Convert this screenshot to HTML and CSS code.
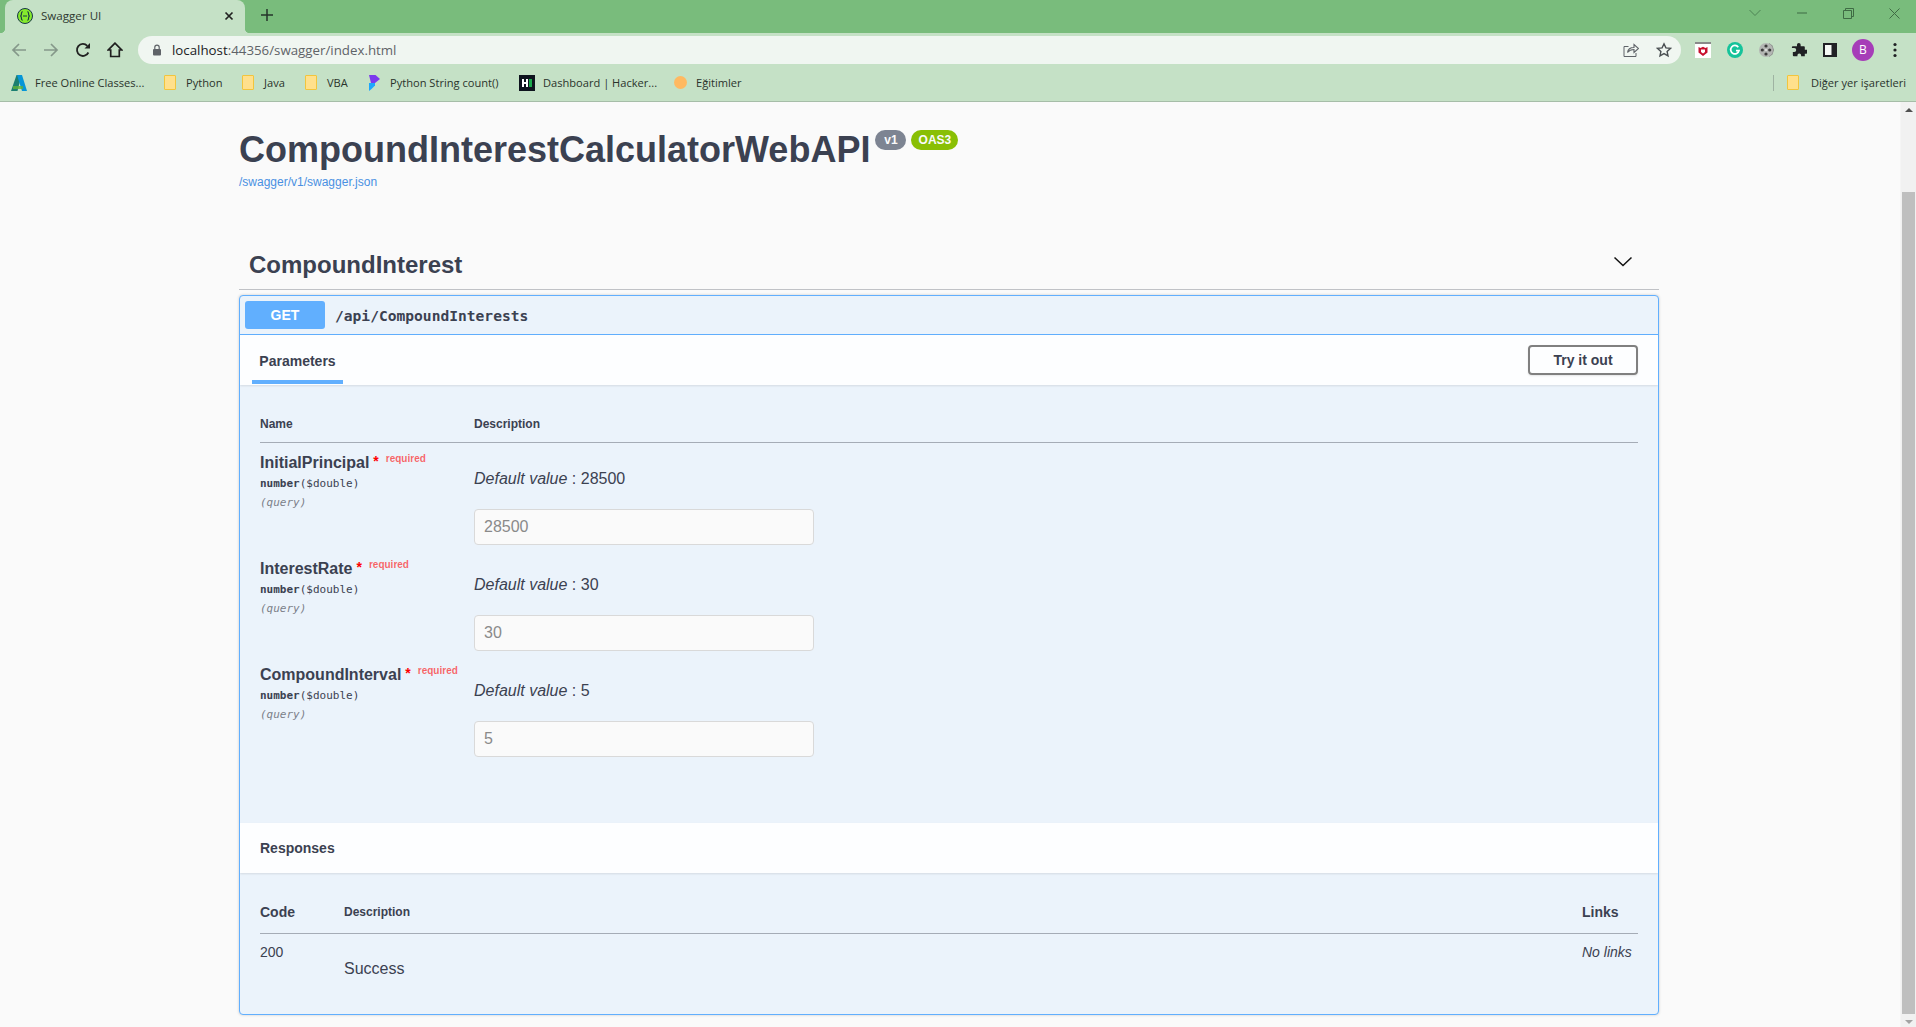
FILE: index.html
```html
<!DOCTYPE html>
<html lang="en">
<head>
<meta charset="utf-8">
<title>Swagger UI</title>
<link rel="stylesheet" href="styles.css">
</head>
<body>
<div class="browser">
  <header class="titlebar">
    <div class="tab">
      <svg class="favicon" viewBox="0 0 16 16" width="16" height="16"><circle cx="8" cy="8" r="7.5" fill="#85ea2d" stroke="#173647"/><path d="M5.6 3.6c-1.6 0-1 2.6-1.4 3.6-.2.5-.6.8-1 .8.4 0 .8.3 1 .8.4 1-.2 3.6 1.4 3.6M10.4 3.6c1.6 0 1 2.6 1.4 3.6.2.5.6.8 1 .8-.4 0-.8.3-1 .8-.4 1 .2 3.6-1.4 3.6M6 8h4" fill="none" stroke="#173647" stroke-width="1.1"/></svg>
      <span class="tab-title">Swagger UI</span>
      <svg class="tab-close" viewBox="0 0 10 10" width="10" height="10"><path d="M1.5 1.5l7 7M8.5 1.5l-7 7" stroke="#222" stroke-width="1.7"/></svg>
    </div>
    <svg class="new-tab" viewBox="0 0 12 12" width="12" height="12"><path d="M6 0v12M0 6h12" stroke="#25352a" stroke-width="1.5"/></svg>
    <div class="window-controls">
      <svg viewBox="0 0 12 8" width="12" height="8"><path d="M.5 1L6 6.5 11.500 1" fill="none" stroke="#4f8354" stroke-width="1"/></svg>
      <svg viewBox="0 0 12 2" width="12" height="2"><path d="M1 1h10" stroke="#3f6b44" stroke-width="1"/></svg>
      <svg viewBox="0 0 11 11" width="11" height="11"><path d="M.5 2.500h8v8h-8zM2.500 2.500v-2h8v8h-2" fill="none" stroke="#3f6b44" stroke-width="1"/></svg>
      <svg viewBox="0 0 11 11" width="11" height="11"><path d="M.5.5l10 10M10.500.5l-10 10" stroke="#3f6b44" stroke-width="1"/></svg>
    </div>
  </header>

  <nav class="toolbar">
    <div class="nav-buttons">
      <svg viewBox="0 0 16 16" width="16" height="16"><path d="M15 8H2M8 2L2 8l6 6" fill="none" stroke="#85988a" stroke-width="1.7"/></svg>
      <svg viewBox="0 0 16 16" width="16" height="16"><path d="M1 8h13M8 2l6 6-6 6" fill="none" stroke="#85988a" stroke-width="1.7"/></svg>
      <svg viewBox="0 0 16 16" width="16" height="16"><path d="M13.400 10.500A6 6 0 1 1 12.300 3.800" fill="none" stroke="#222" stroke-width="1.800"/><path d="M9.500 6.500h5.500V1z" fill="#222"/></svg>
      <svg viewBox="0 0 16 16" width="16" height="16"><path d="M8 1.200L1.300 8h2.400v6.500h8.600V8h2.400z" fill="none" stroke="#1f1f1f" stroke-width="1.700"/></svg>
    </div>
    <div class="omnibox">
      <svg class="lock" viewBox="0 0 10 12" width="10" height="12"><path d="M2.800 5V3.300a2.200 2.200 0 0 1 4.400 0V5" fill="none" stroke="#5f6368" stroke-width="1.200"/><rect x="1" y="5" width="8" height="6.500" rx="1" fill="#5f6368"/></svg>
      <span class="url"><span class="url-host">localhost</span>:44356/swagger/index.html</span>
      <svg class="omni-share" viewBox="0 0 16 16" width="16" height="16"><path d="M5.500 4.500H1v10h12v-3.500" fill="none" stroke="#5f6368" stroke-width="1"/><path d="M4.500 10.500c.5-3.500 3-5 6.500-5V2.500l4.500 4-4.500 4V7.500c-2.500 0-5 1-6.500 3z" fill="none" stroke="#5f6368" stroke-width="1.100"/></svg>
      <svg class="omni-star" viewBox="0 0 16 16" width="16" height="16"><path d="M8 1.800l1.900 4.100 4.500.5-3.300 3 .9 4.400L8 11.600l-4 2.200.9-4.400-3.300-3 4.500-.5z" fill="none" stroke="#4a4f52" stroke-width="1.400"/></svg>
    </div>
    <div class="extensions">
      <svg viewBox="0 0 16 16" width="16" height="16"><rect width="16" height="16" fill="#fff"/><rect width="16" height="2" fill="#8a8a8a"/><path d="M3.500 5l2 1 2.500-1.200L10.500 6l2-1v5.500L8 14l-4.500-3.500z" fill="#c8102e"/><path d="M6 7.500h4v2.500L8 11.500 6 10z" fill="#fff"/></svg>
      <svg viewBox="0 0 16 16" width="16" height="16"><circle cx="8" cy="8" r="8" fill="#15c39a"/><path d="M11.300 5.200A4.200 4.200 0 1 0 12 8.600H9" fill="none" stroke="#fff" stroke-width="1.700"/></svg>
      <svg viewBox="0 0 16 16" width="16" height="16"><path d="M10 1l3.500 2.500L15 8l-1.500 4.500L10 15z" fill="#8b8e8b"/><circle cx="7" cy="8" r="7" fill="#b3b6b3"/><circle cx="7" cy="4" r="1.600" fill="#3c3c3c"/><circle cx="7" cy="12" r="1.600" fill="#3c3c3c"/><circle cx="3.300" cy="8" r="1.600" fill="#3c3c3c"/><circle cx="10.700" cy="8" r="1.600" fill="#3c3c3c"/><circle cx="7" cy="8" r=".9" fill="#eee"/></svg>
      <svg viewBox="0 0 16 16" width="16" height="16"><path d="M6 2.500a2 2 0 0 1 4 0V4h3.500a1 1 0 0 1 1 1v2.800H16a2.200 2.200 0 0 1 0 4.400h-1.500V15h-4v-1a2 2 0 0 0-4 0v1H2.500a1 1 0 0 1-1-1v-3.500H3a2.200 2.200 0 0 0 0-4.400H.5V5a1 1 0 0 1 1-1H6z" fill="#202124" transform="scale(.92) translate(.5 .5)"/></svg>
      <svg viewBox="0 0 14 14" width="14" height="14"><rect width="14" height="14" fill="#202124"/><rect x="2" y="2" width="6.500" height="10" fill="#f5faf5"/></svg>
      <span class="avatar">B</span>
      <svg class="menu-dots" viewBox="0 0 4 16" width="4" height="16"><circle cx="2" cy="2.500" r="1.600" fill="#202124"/><circle cx="2" cy="8" r="1.600" fill="#202124"/><circle cx="2" cy="13.500" r="1.600" fill="#202124"/></svg>
    </div>
  </nav>

  <nav class="bookmarks">
    <a class="bookmark bm-a"><svg viewBox="0 0 16 16" width="16" height="16"><path d="M5.500 0h5L6.500 16H0z" fill="#1c7f71"/><path d="M6 0h5l5 16h-5z" fill="#0696d7"/><path d="M2 11h10v3H2z" fill="#5fb13a" opacity=".8"/></svg><span>Free Online Classes...</span></a>
    <a class="bookmark bm-b"><span class="folder"></span><span>Python</span></a>
    <a class="bookmark bm-c"><span class="folder"></span><span>Java</span></a>
    <a class="bookmark bm-d"><span class="folder"></span><span>VBA</span></a>
    <a class="bookmark bm-e"><svg viewBox="0 0 12 16" width="12" height="16"><path d="M1 0h6.500L12 4 7 8v3L3 8z" fill="#7c3aed"/><path d="M1 8h6v2.500L3.500 14 1 16z" fill="#1ea7fd"/></svg><span>Python String count()</span></a>
    <a class="bookmark bm-f"><svg viewBox="0 0 16 16" width="16" height="16"><rect width="16" height="16" fill="#0e141e"/><rect x="3" y="4" width="2" height="8" fill="#fff"/><rect x="5" y="7" width="2" height="2" fill="#fff"/><rect x="7" y="4" width="2" height="8" fill="#fff"/><rect x="10" y="4" width="3" height="8" fill="#1ba94c"/></svg><span>Dashboard | Hacker...</span></a>
    <a class="bookmark bm-g"><span class="dot"></span><span>Eğitimler</span></a>
    <div class="other-bookmarks"><span class="bm-sep"></span><a class="bookmark bm-o"><span class="folder"></span><span>Diğer yer işaretleri</span></a></div>
  </nav>

  <div class="viewport">
    <main class="page">
      <div class="wrapper">
        <section class="info">
          <h1 class="title">CompoundInterestCalculatorWebAPI<span class="badges"><small class="badge badge-version">v1</small><small class="badge badge-oas">OAS3</small></span></h1>
          <a class="spec-link">/swagger/v1/swagger.json</a>
        </section>

        <section class="tag">
          <h3 class="tag-name">CompoundInterest</h3>
          <svg class="tag-arrow" viewBox="0 0 20 20" width="20" height="20"><path d="M1.500 5.500L10 13.500l8.500-8" fill="none" stroke="#111" stroke-width="1.500"/></svg>
        </section>

        <article class="opblock">
          <div class="summary">
            <span class="method">GET</span>
            <span class="path">/api/CompoundInterests</span>
          </div>

          <div class="section-head params-head">
            <div class="tab-header"><span>Parameters</span></div>
            <button class="try-btn">Try it out</button>
          </div>

          <div class="params">
            <div class="params-cols">
              <span class="col-name">Name</span>
              <span class="col-desc">Description</span>
            </div>

            <div class="param">
              <div class="param-info">
                <div class="param-name">InitialPrincipal<span class="star">*</span><span class="req">required</span></div>
                <div class="param-type">number<span class="format">($double)</span></div>
                <div class="param-in">(query)</div>
              </div>
              <div class="param-body">
                <p class="default"><i>Default value</i> : 28500</p>
                <input class="param-input" placeholder="28500">
              </div>
            </div>

            <div class="param">
              <div class="param-info">
                <div class="param-name">InterestRate<span class="star">*</span><span class="req">required</span></div>
                <div class="param-type">number<span class="format">($double)</span></div>
                <div class="param-in">(query)</div>
              </div>
              <div class="param-body">
                <p class="default"><i>Default value</i> : 30</p>
                <input class="param-input" placeholder="30">
              </div>
            </div>

            <div class="param">
              <div class="param-info">
                <div class="param-name">CompoundInterval<span class="star">*</span><span class="req">required</span></div>
                <div class="param-type">number<span class="format">($double)</span></div>
                <div class="param-in">(query)</div>
              </div>
              <div class="param-body">
                <p class="default"><i>Default value</i> : 5</p>
                <input class="param-input" placeholder="5">
              </div>
            </div>
          </div>

          <div class="section-head responses-head"><h4>Responses</h4></div>

          <div class="responses">
            <div class="resp-cols">
              <span class="resp-code-h">Code</span>
              <span class="resp-desc-h">Description</span>
              <span class="resp-links-h">Links</span>
            </div>
            <div class="resp-row">
              <span class="resp-code">200</span>
              <span class="resp-desc">Success</span>
              <span class="resp-links">No links</span>
            </div>
          </div>
        </article>
      </div>
    </main>
    <aside class="scrollbar">
      <span class="sb-arrow sb-up"></span>
      <span class="sb-thumb"></span>
      <span class="sb-arrow sb-down"></span>
    </aside>
  </div>
</div>
</body>
</html>
```

FILE: styles.css
```css
* { box-sizing: border-box; }
html, body { margin: 0; padding: 0; height: 100%; overflow: hidden; }
body { font-family: "Liberation Sans", Arial, sans-serif; color: #3b4151; background: #fafafa; }
.browser { display: flex; flex-direction: column; height: 1027px; }

/* tab strip */
.titlebar { height: 33px; background: #79bc7c; display: flex; align-items: center; flex: none; }
.tab { position: relative; margin-left: 5px; width: 240px; height: 33px; background: #c5e1c6; border-radius: 8px 8px 0 0; display: flex; align-items: center; padding: 0 0 2px 12px; }
.tab::before { content: ""; position: absolute; left: -5px; bottom: 0; width: 5px; height: 5px; background: radial-gradient(circle at 0 0, transparent 5px, #c5e1c6 5.500px); }
.tab::after { content: ""; position: absolute; right: -5px; bottom: 0; width: 5px; height: 5px; background: radial-gradient(circle at 100% 0, transparent 5px, #c5e1c6 5.500px); }
.favicon { flex: none; }
.tab-title { font: 11.600px "Open Sans", sans-serif; color: #2e3a31; margin-left: 8px; flex: 1; }
.tab-close { margin-right: 11px; }
.new-tab { margin-left: 16px; margin-bottom: 3px; }
.window-controls { margin-left: auto; display: flex; align-items: center; gap: 35px; padding-right: 16px; margin-bottom: 7px; }

/* toolbar */
.toolbar { height: 33px; background: #c5e1c6; display: flex; align-items: center; flex: none; }
.nav-buttons { display: flex; align-items: center; gap: 16px; padding-left: 11px; width: 138px; }
.omnibox { width: 1543px; height: 28px; background: #f0f6f1; border-radius: 14px; display: flex; align-items: center; padding: 0 9px 0 14px; }
.lock { flex: none; }
.url { font: 13.300px "Open Sans", sans-serif; color: #5f6368; margin-left: 10px; flex: 1; }
.url-host { color: #202124; }
.omni-star { margin-left: 17px; }
.extensions { display: flex; align-items: center; gap: 16px; margin-left: 14px; }
.avatar { width: 22px; height: 22px; border-radius: 50%; background: #a63db8; color: #fff; font: 12px "Open Sans", sans-serif; display: flex; align-items: center; justify-content: center; margin-left: -1px; }
.menu-dots { margin-left: 3px; }

/* bookmarks */
.bookmarks { height: 36px; background: #c5e1c6; border-bottom: 1px solid #a6bda8; display: flex; align-items: center; padding: 0 10px 2px 11px; flex: none; font: 11.100px "Open Sans", sans-serif; color: #2a332c; }
.bookmark { display: flex; align-items: center; gap: 8px; white-space: nowrap; flex: none; }
.bookmark svg, .folder, .dot { flex: none; }
.bm-a { width: 153px; }
.bm-b { width: 78px; gap: 10px; }
.bm-c { width: 63px; gap: 10px; }
.bm-d { width: 63px; gap: 10px; }
.bm-e { width: 151px; gap: 10px; }
.bm-f { width: 155px; }
.bm-g { gap: 9px; }
.bm-o { gap: 12px; }
.folder { width: 12px; height: 15px; background: #ffe08c; border: 1px solid #f2c53d; border-radius: 1px; display: block; }
.dot { width: 13px; height: 13px; border-radius: 50%; background: #ffb961; display: block; }
.other-bookmarks { margin-left: auto; display: flex; align-items: center; gap: 13px; }
.bm-sep { width: 1px; height: 16px; background: #9fb3a2; display: block; }

/* page */
.viewport { flex: 1; display: flex; min-height: 0; }
.page { flex: 1; background: #fafafa; overflow: hidden; }
.wrapper { width: 1420px; margin-left: 239px; }
.scrollbar { width: 16px; flex: none; background: #f1f1f1; display: flex; flex-direction: column; align-items: center; border-left: 1px solid #f5f5f5; }
.sb-arrow { width: 0; height: 0; border-left: 4px solid transparent; border-right: 4px solid transparent; flex: none; }
.sb-up { border-bottom: 4px solid #505050; margin-top: 6px; }
.sb-down { border-top: 4px solid #a3a3a3; margin: 6px 0 3px; }
.sb-thumb { width: 13px; flex: 1; margin-top: 80px; background: #bfbfbf; }

.info { height: 152px; padding-top: 27px; }
.title { margin: 0; font-size: 36px; font-weight: 700; line-height: 42px; color: #3b4151; display: flex; white-space: nowrap; }
.badges { display: flex; gap: 4px; margin-left: 5px; align-items: flex-start; }
.badge { height: 20px; border-radius: 57px; color: #fafafa; font: 700 12px/20px "Liberation Sans", sans-serif; margin-top: 1px; display: block; text-align: center; }
.badge-version { background: #7d8492; width: 31px; }
.badge-oas { background: #89bf04; width: 47px; margin-left: 1px; }
.spec-link { display: block; margin-top: 4px; font-size: 12px; line-height: 14px; color: #4990e2; }

.tag { height: 36px; padding: 0 10px 15px 10px; display: flex; align-items: center; justify-content: space-between; border-bottom: 1px solid rgba(59,65,81,.3); }
.tag-name { margin: 0; font-size: 24px; font-weight: 700; line-height: 21px; color: #3b4151; }
.tag-arrow { margin: 0 16px 4px 0; }

.opblock { margin-top: 5px; height: 720px; border: 1px solid #61affe; border-radius: 4px; background: #ebf3fb; box-shadow: 0 0 3px rgba(0,0,0,.19); overflow: hidden; }
.summary { height: 39px; border-bottom: 1px solid #61affe; display: flex; align-items: center; padding-left: 5px; }
.method { width: 80px; height: 28px; background: #61affe; border-radius: 3px; color: #fff; font-size: 14px; font-weight: 700; line-height: 28px; text-align: center; margin-top: -1px; }
.path { margin-left: 10px; font: 700 14.600px "DejaVu Sans Mono", monospace; color: #3b4151; }

.section-head { background: rgba(255,255,255,.88); box-shadow: 0 1px 2px rgba(0,0,0,.1); display: flex; align-items: center; }
.params-head { height: 50px; padding: 0 20px 0 12px; justify-content: space-between; }
.tab-header { height: 49px; width: 91px; margin-top: -1px; display: flex; align-items: center; justify-content: center; border-bottom: 4px solid #61affe; padding-top: 6px; font-size: 14px; font-weight: 700; color: #3b4151; }
.try-btn { width: 110px; height: 30px; background: transparent; border: 2px solid #808080; border-radius: 4px; font: 700 14px "Liberation Sans", sans-serif; color: #3b4151; box-shadow: 0 1px 2px rgba(0,0,0,.1); padding: 0; }

.params { height: 438px; padding: 20px 20px 0 20px; }
.params-cols { height: 38px; border-bottom: 1px solid rgba(59,65,81,.4); display: flex; font-size: 12px; font-weight: 700; padding-top: 12px; line-height: 14px; color: #3b4151; }
.col-name { width: 214px; }
.param { height: 106px; display: flex; }
.param-info { width: 214px; padding-top: 6px; }
.param-name { font-size: 16px; font-weight: 700; line-height: 20px; white-space: nowrap; color: #3b4151; }
.star { color: #f00; font-size: 14px; font-weight: 700; vertical-align: 2px; margin-left: 4px; }
.req { color: rgba(255,0,0,.6); font-size: 10px; font-weight: 700; vertical-align: 6px; margin-left: 7px; }
.param-type { font: 700 11px/16px "DejaVu Sans Mono", monospace; margin-top: 3px; color: #3b4151; }
.format { font-weight: 400; color: #3b4151; }
.param-in { font: italic 400 11px/16px "DejaVu Sans Mono", monospace; margin-top: 3px; color: #7b7f89; }
.param-body { flex: 1; padding-top: 26px; display: flex; flex-direction: column; align-items: flex-start; }
.default { margin: 0; font-size: 16px; line-height: 20px; color: #3b4151; }
.param-input { width: 340px; height: 36px; margin-top: 20px; border: 1px solid #d9d9d9; border-radius: 4px; background: #fafafa; padding: 0 9px; font: 16px "Liberation Sans", sans-serif; outline: none; }
.param-input::placeholder { color: #8a8a8a; opacity: 1; }

.responses-head { height: 50px; padding: 0 20px; }
.responses-head h4 { margin: 0; font-size: 14px; font-weight: 700; color: #3b4151; }
.responses { padding: 0 20px; }
.resp-cols { height: 61px; border-bottom: 1px solid rgba(59,65,81,.4); display: flex; align-items: flex-end; padding-bottom: 13px; color: #3b4151; }
.resp-code-h { width: 84px; font-size: 14px; font-weight: 700; line-height: 16px; }
.resp-desc-h { flex: 1; font-size: 12px; font-weight: 700; line-height: 16px; }
.resp-links-h { width: 56px; font-size: 14px; font-weight: 700; line-height: 16px; }
.resp-row { display: flex; align-items: flex-start; padding-top: 10px; color: #3b4151; }
.resp-code { width: 84px; font-size: 14px; line-height: 16px; }
.resp-desc { flex: 1; font-size: 16px; line-height: 20px; padding-top: 15px; }
.resp-links { width: 56px; font-size: 14px; font-style: italic; line-height: 16px; white-space: nowrap; }
```
